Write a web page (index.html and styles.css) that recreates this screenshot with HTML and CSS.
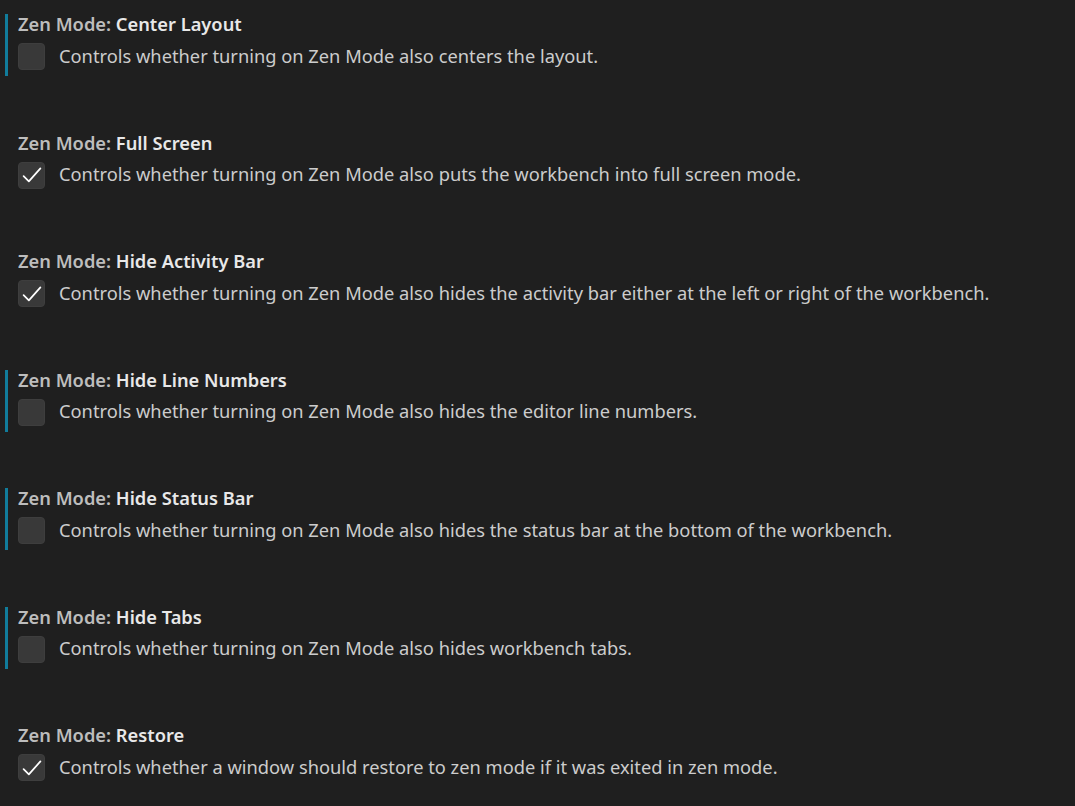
FILE: index.html
```html
<!DOCTYPE html>
<html lang="en">
<head>
<meta charset="utf-8">
<title>Zen Mode settings</title>
<link rel="stylesheet" href="styles.css">
</head>
<body>
<div class="settings">
  <div class="item modified">
    <div class="title"><span class="cat">Zen Mode: </span><span class="label">Center Layout</span></div>
    <div class="row"><span class="box"></span><span class="desc">Controls whether turning on Zen Mode also centers the layout.</span></div>
  </div>
  <div class="item">
    <div class="title"><span class="cat">Zen Mode: </span><span class="label">Full Screen</span></div>
    <div class="row"><span class="box checked"><svg viewBox="0 0 16 16"><path d="M2.4 8.7 L5.9 12.2 L13.6 3.6"/></svg></span><span class="desc">Controls whether turning on Zen Mode also puts the workbench into full screen mode.</span></div>
  </div>
  <div class="item">
    <div class="title"><span class="cat">Zen Mode: </span><span class="label">Hide Activity Bar</span></div>
    <div class="row"><span class="box checked"><svg viewBox="0 0 16 16"><path d="M2.4 8.7 L5.9 12.2 L13.6 3.6"/></svg></span><span class="desc">Controls whether turning on Zen Mode also hides the activity bar either at the left or right of the workbench.</span></div>
  </div>
  <div class="item modified">
    <div class="title"><span class="cat">Zen Mode: </span><span class="label">Hide Line Numbers</span></div>
    <div class="row"><span class="box"></span><span class="desc">Controls whether turning on Zen Mode also hides the editor line numbers.</span></div>
  </div>
  <div class="item modified">
    <div class="title"><span class="cat">Zen Mode: </span><span class="label">Hide Status Bar</span></div>
    <div class="row"><span class="box"></span><span class="desc">Controls whether turning on Zen Mode also hides the status bar at the bottom of the workbench.</span></div>
  </div>
  <div class="item modified">
    <div class="title"><span class="cat">Zen Mode: </span><span class="label">Hide Tabs</span></div>
    <div class="row"><span class="box"></span><span class="desc">Controls whether turning on Zen Mode also hides workbench tabs.</span></div>
  </div>
  <div class="item">
    <div class="title"><span class="cat">Zen Mode: </span><span class="label">Restore</span></div>
    <div class="row"><span class="box checked"><svg viewBox="0 0 16 16"><path d="M2.4 8.7 L5.9 12.2 L13.6 3.6"/></svg></span><span class="desc">Controls whether a window should restore to zen mode if it was exited in zen mode.</span></div>
  </div>
</div>
</body>
</html>
```
FILE: styles.css
```css
html, body {
  margin: 0;
  padding: 0;
  background: #1f1f1f;
  height: 100%;
  overflow: hidden;
}
body {
  font-family: "Noto Sans", "Open Sans", sans-serif;
  font-size: 18.3px;
  color: #cccccc;
}
.settings {
  display: flex;
  flex-direction: column;
}
.item {
  position: relative;
  height: 118.5px;
  box-sizing: border-box;
  padding: 11px 0 0 18px;
  display: flex;
  flex-direction: column;
  gap: 6px;
}
.item.modified::before {
  content: "";
  position: absolute;
  left: 5px;
  top: 14px;
  width: 3px;
  height: 62px;
  background: #117c9b;
}
.title {
  line-height: 26px;
  font-weight: 600;
  white-space: nowrap;
}
.cat {
  color: #bdbdbd;
}
.label {
  color: #e8e8e8;
}
.row {
  display: flex;
  align-items: center;
  gap: 14px;
  height: 27px;
}
.box {
  flex: none;
  width: 27px;
  height: 27px;
  box-sizing: border-box;
  border-radius: 4px;
  background: #393939;
  border: 1px solid #3e3e3e;
  display: flex;
  align-items: center;
  justify-content: center;
}
.box svg {
  width: 24px;
  height: 24px;
  fill: none;
  stroke: #ffffff;
  stroke-width: 1.15;
  stroke-linecap: round;
  stroke-linejoin: round;
}
.desc {
  line-height: 26px;
  white-space: nowrap;
  margin-bottom: 2px;
}
```
